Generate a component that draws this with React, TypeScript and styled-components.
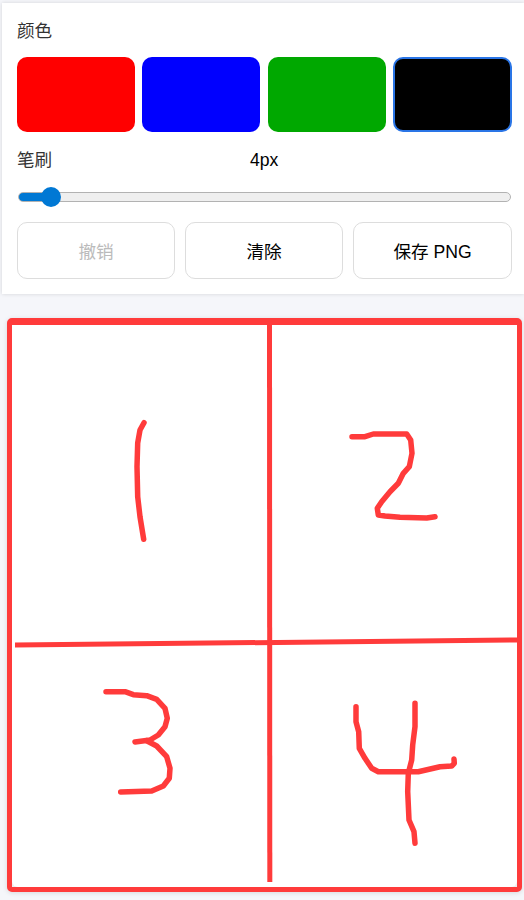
import React, { useState } from "react";
import styled, { createGlobalStyle } from "styled-components";

const FONT = `"Liberation Sans", Arial, "Noto Sans CJK SC", sans-serif`;

const Global = createGlobalStyle`
  html, body { margin: 0; padding: 0; background: #f5f6fa; }
  body { font-family: ${FONT}; overflow: hidden; }
`;

const Page = styled.div`
  width: 524px;
  height: 900px;
  padding: 3px 0 0 2px;
  box-sizing: border-box;
  overflow: hidden;
  display: flex;
  flex-direction: column;
`;

const Panel = styled.section`
  background: #fff;
  box-shadow: 0 0 4px rgba(0, 0, 0, 0.14);
  padding: 17px 12px 15px 15px;
  height: 291px;
  box-sizing: border-box;
  display: flex;
  flex-direction: column;
`;

const Label = styled.div`
  font-size: 17.6px;
  line-height: 22px;
  color: #333;
`;

const Swatches = styled.div`
  display: grid;
  grid-template-columns: repeat(3, 118px) 1fr;
  gap: 7.33px;
  margin-top: 15px;
  height: 75px;
`;

const Swatch = styled.button<{ $color: string; $active?: boolean }>`
  background: ${(p) => p.$color};
  border: ${(p) => (p.$active ? "2px solid #2a75e6" : "none")};
  border-radius: 10px;
  padding: 0;
  box-sizing: border-box;
`;

const BrushRow = styled.div`
  display: grid;
  grid-template-columns: 233px 1fr;
  margin-top: 17px;
`;

const Value = styled.div`
  font-size: 17.6px;
  line-height: 22px;
  color: #000;
`;

const Range = styled.input`
  appearance: none;
  -webkit-appearance: none;
  display: block;
  width: 493px;
  height: 20px;
  margin: 16px 0 0 1px;
  padding: 0;
  background: transparent;

  &::-webkit-slider-runnable-track {
    height: 10px;
    box-sizing: border-box;
    border-radius: 5px;
    border: 1px solid #b2b2b2;
    background: linear-gradient(to right, #0078d4 0 32px, #efefef 32px);
  }
  &::-webkit-slider-thumb {
    -webkit-appearance: none;
    width: 20px;
    height: 20px;
    margin-top: -6px;
    border-radius: 50%;
    border: none;
    background: #0078d4;
  }
`;

const Actions = styled.div`
  display: grid;
  grid-template-columns: 158px 158px 1fr;
  gap: 10px;
  margin-top: 15px;
`;

const ActionButton = styled.button`
  height: 57px;
  padding: 0;
  background: #fff;
  border: 1px solid #ddd;
  border-radius: 10px;
  font-family: ${FONT};
  font-size: 17.6px;
  color: #000;

  &:disabled {
    color: #bbb;
  }
`;

const Board = styled.div`
  width: 515px;
  height: 574px;
  margin: 24px 0 0 5px;
  box-sizing: border-box;
  background: #eeeeee;
  border: 5px solid #ff3b3b;
  border-top-width: 7px;
  border-radius: 5px;
  box-shadow: 0 1px 5px rgba(0, 0, 0, 0.12);
  overflow: hidden;
`;

const Drawing = styled.svg`
  display: block;
  width: 505px;
  height: 562px;
  background: #fff;
  border-radius: 0 0 6px 6px;
  fill: none;
  stroke: #ff3b3b;
  stroke-width: 5.5;
  stroke-linecap: round;
  stroke-linejoin: round;
`;

const Rule = styled.path`
  stroke-width: 5;
  stroke-linecap: butt;
`;

const rules: string[] = ["M269.5 325 L269.8 882", "M15 645 L520 640"];

const strokes: string[] = [
  // 1
  "M144 422.7 L140 430 L137.7 443 L137 466.7 L137.7 496.7 L140 516.7 L143.7 539.3",
  // 2
  "M352 436.7 L365 436.7 L373.3 434 L406.7 434 L410.7 440 L412 453.3 L409.3 466.7 L403.3 473.3 L398.3 483.3 L390 491.7 L381.7 501.7 L377.3 508.3 L378.3 515 L385 516 L400 517.3 L426.7 518 L435 516.7",
  // 3
  "M106 691.7 L125 691.7 L133.3 694.7 L146.7 695.7 L156.7 699.3 L165 708.3 L167.3 718.3 L165 726.7 L158.3 735 L150 740 L135 742",
  "M146.7 740.7 L156.7 746 L166.7 756.7 L170 768.3 L169.3 778.3 L163.3 786 L151.7 791 L120.7 792",
  // 4
  "M356 706.7 L356 721.7 L358.7 731.7 L359.3 748.3 L365 758.3 L371.7 768.3 L378.3 771.7 L418.3 771.7 L440 766.7 L451.7 766 L454.3 763.3 L454 759",
  "M415 703.3 L415 726.7 L412.7 745 L411.7 760 L408.3 773.3 L407.7 791.7 L409 820 L414 831.7 L415 843.3",
];

export default function App() {
  const [size, setSize] = useState(4);
  return (
    <Page>
      <Global />
      <Panel>
        <Label>颜色</Label>
        <Swatches>
          <Swatch $color="#ff0000" aria-label="red" />
          <Swatch $color="#0000ff" aria-label="blue" />
          <Swatch $color="#00a800" aria-label="green" />
          <Swatch $color="#000000" $active aria-label="black" />
        </Swatches>
        <BrushRow>
          <Label>笔刷</Label>
          <Value>{size}px</Value>
        </BrushRow>
        <Range
          type="range"
          min={1}
          max={66}
          value={size}
          onChange={(e) => setSize(Number(e.target.value))}
        />
        <Actions>
          <ActionButton disabled>撤销</ActionButton>
          <ActionButton>清除</ActionButton>
          <ActionButton>保存 PNG</ActionButton>
        </Actions>
      </Panel>
      <Board>
        <Drawing viewBox="12 325 505 562">
          {rules.map((d) => (
            <Rule key={d} d={d} />
          ))}
          {strokes.map((d) => (
            <path key={d} d={d} />
          ))}
        </Drawing>
      </Board>
    </Page>
  );
}
